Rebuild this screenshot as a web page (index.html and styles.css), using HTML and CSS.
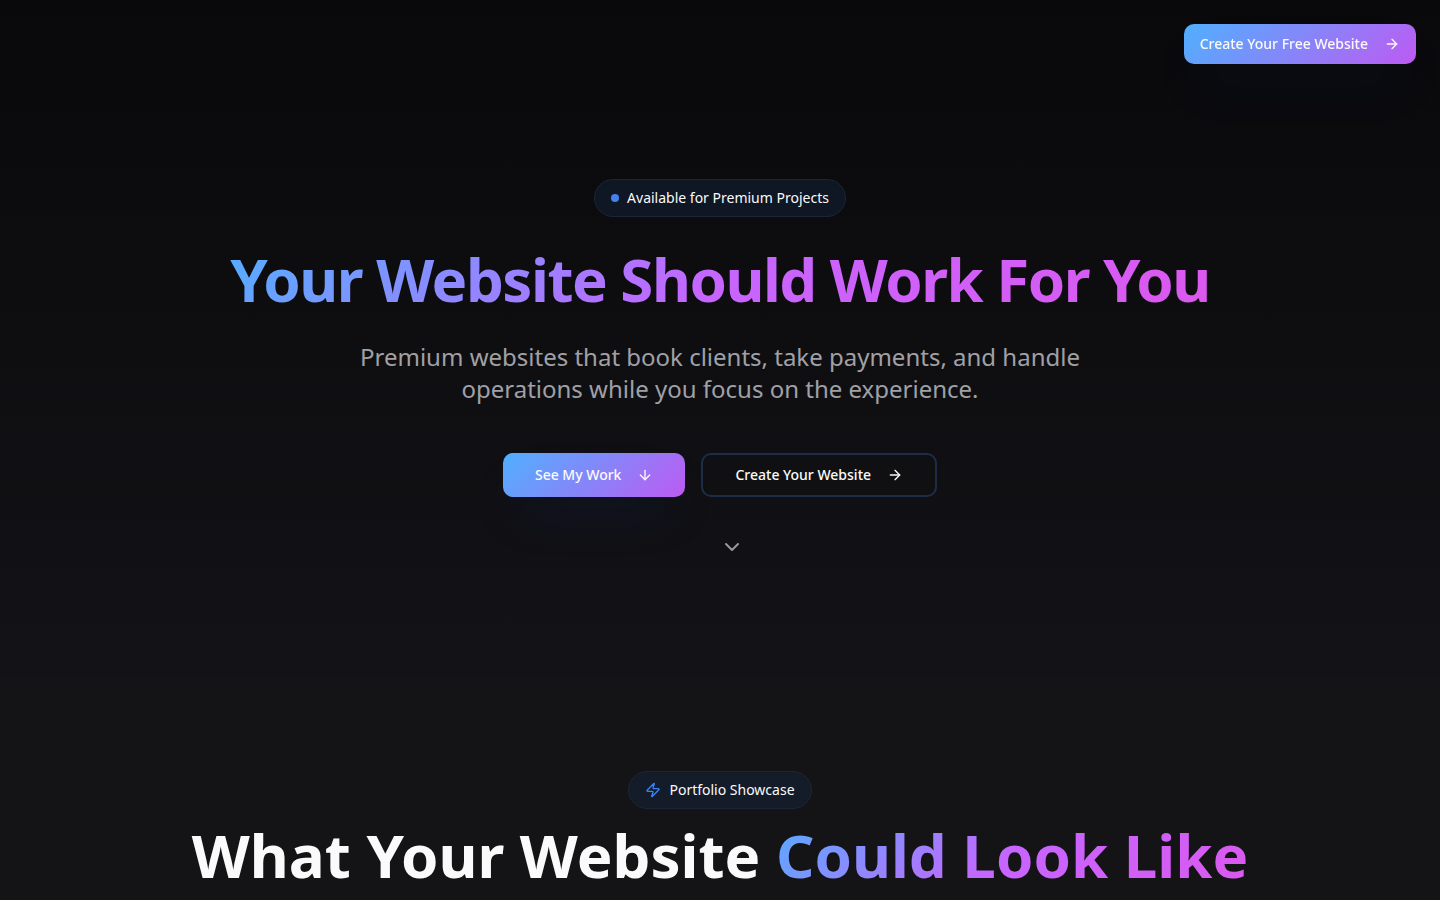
FILE: index.html
```html
<!DOCTYPE html>
<html lang="en">
<head>
  <meta charset="UTF-8">
  <meta name="viewport" content="width=device-width, initial-scale=1.0">
  <title>Your Website Should Work For You</title>
  <link rel="stylesheet" href="styles.css">
</head>
<body>
  <header class="topbar">
    <button class="btn btn-primary btn-small" type="button">
      Create Your Free Website
      <svg class="icon" viewBox="0 0 24 24" aria-hidden="true"><path d="M5 12h14"/><path d="m12 5 7 7-7 7"/></svg>
    </button>
  </header>

  <main>
    <section class="hero">
      <div class="badge">
        <span class="dot"></span>
        Available for Premium Projects
      </div>
      <h1 class="title title-hero gradient-text">Your Website Should Work For You</h1>
      <p class="subtitle">Premium websites that book clients, take payments, and handle operations while you focus on the experience.</p>
      <div class="actions">
        <button class="btn btn-primary" type="button">
          See My Work
          <svg class="icon" viewBox="0 0 24 24" aria-hidden="true"><path d="M12 5v14"/><path d="m19 12-7 7-7-7"/></svg>
        </button>
        <button class="btn btn-outline" type="button">
          Create Your Website
          <svg class="icon" viewBox="0 0 24 24" aria-hidden="true"><path d="M5 12h14"/><path d="m12 5 7 7-7 7"/></svg>
        </button>
      </div>
      <div class="scroll-hint">
        <svg class="chevron" viewBox="0 0 24 24" aria-hidden="true"><path d="m6 9 6 6 6-6"/></svg>
      </div>
    </section>

    <section class="portfolio">
      <div class="badge">
        <svg class="icon icon-zap" viewBox="0 0 24 24" aria-hidden="true"><path d="M4 14a1 1 0 0 1-.78-1.63l9.9-10.2a.5.5 0 0 1 .86.46l-1.92 6.02A1 1 0 0 0 13 10h7a1 1 0 0 1 .78 1.63l-9.9 10.2a.5.5 0 0 1-.86-.46l1.92-6.02A1 1 0 0 0 11 14z"/></svg>
        Portfolio Showcase
      </div>
      <h2 class="title">What Your Website <span class="gradient-text">Could Look Like</span></h2>
    </section>
  </main>
</body>
</html>
```
FILE: styles.css
```css
* {
  box-sizing: border-box;
  margin: 0;
}
body {
  font-family: "Noto Sans", sans-serif;
  font-size: 14px;
  line-height: 20px;
  color: #fafafa;
  background-color: #141416;
}
.topbar {
  position: fixed;
  top: 0;
  left: 0;
  right: 0;
  z-index: 10;
  display: flex;
  justify-content: flex-end;
  padding: 24px;
}
.hero,
.portfolio {
  display: flex;
  flex-direction: column;
  align-items: center;
  text-align: center;
}
.hero {
  padding: 179px 24px 116px;
  background: linear-gradient(to bottom, #09090b, #131317);
}
.portfolio {
  padding: 96px 24px 12px;
}

.badge {
  display: inline-flex;
  align-items: center;
  gap: 8px;
  padding: 8px 16px;
  border: 1px solid #1c2638;
  border-radius: 19px;
  background-color: #0f1624;
}
.portfolio .badge {
  background-color: #141c2a;
}
.dot {
  width: 8px;
  height: 8px;
  border-radius: 50%;
  background-color: #4580ee;
}

.title {
  margin-top: 16px;
  font-size: 60px;
  line-height: 60px;
  font-weight: 700;
}
.title-hero {
  margin: 32px 0;
  letter-spacing: -0.025em;
}
.gradient-text {
  background: linear-gradient(135deg, #55adff 0%, #c765ff 50%, #dc58ee 100%);
  -webkit-background-clip: text;
  background-clip: text;
  color: transparent;
}
.subtitle {
  max-width: 768px;
  font-size: 24px;
  line-height: 32px;
  color: #a0a0a6;
}

.actions {
  display: flex;
  flex-wrap: wrap;
  justify-content: center;
  gap: 16px;
  margin-top: 48px;
}
.btn {
  display: inline-flex;
  align-items: center;
  justify-content: center;
  gap: 16px;
  height: 44px;
  padding: 0 32px;
  border: none;
  border-radius: 10px;
  font: inherit;
  font-weight: 500;
  color: #fafafa;
  background: none;
  cursor: pointer;
}
.btn-small {
  height: 40px;
  padding: 0 16px;
}
.btn-primary {
  background: linear-gradient(135deg, #4fb0ff 0%, #be5af2 100%);
  box-shadow: 0 25px 50px -12px rgba(20, 70, 180, 0.15);
}
.btn-outline {
  border: 2px solid #1e2d47;
}

.icon {
  width: 16px;
  height: 16px;
}
.icon,
.chevron {
  fill: none;
  stroke: currentColor;
  stroke-width: 2;
  stroke-linecap: round;
  stroke-linejoin: round;
}
.icon-zap {
  color: #3b82f6;
}
.scroll-hint {
  padding: 38px 0 0 24px;
}
.chevron {
  display: block;
  width: 24px;
  height: 24px;
  color: #98989f;
}
```
